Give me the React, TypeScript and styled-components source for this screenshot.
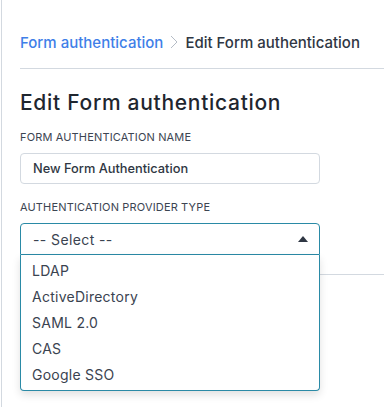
import React from "react";
import styled, { createGlobalStyle } from "styled-components";

const Global = createGlobalStyle`
  html, body { margin: 0; padding: 0; background: #ffffff; }
  body { font-family: Inter, "Open Sans", sans-serif; color: #2d3748; }
  * { box-sizing: border-box; }
`;

const Page = styled.div`
  margin-left: 1px;
  border-left: 1px solid #d3d9e0;
  min-height: 407px;
  padding-left: 18px;
`;

const Breadcrumb = styled.nav`
  display: flex;
  align-items: center;
  height: 69px;
  padding-top: 16px;
  font-size: 15px;
  font-weight: 500;
  border-bottom: 1px solid #d3d9e0;
`;

const Crumb = styled.span<{ $link?: boolean }>`
  color: ${(p) => (p.$link ? "#3f7fe8" : "#2f3743")};
`;

const Chevron = styled.svg`
  margin: 0 7px 0 7px;
`;

const Content = styled.div`
  width: 300px;
`;

const Title = styled.h1`
  margin: 21px 0 0;
  font-size: 21px;
  font-weight: 500;
  letter-spacing: 0.7px;
  color: #1f262f;
  line-height: 26px;
`;

const Field = styled.div<{ $gap: number }>`
  margin-top: ${(p) => p.$gap}px;
  position: relative;
`;

const Label = styled.div`
  font-size: 11px;
  letter-spacing: 0.15px;
  text-transform: uppercase;
  color: #3c4552;
  line-height: 14px;
  margin-bottom: 9px;
`;

const Input = styled.div`
  height: 31px;
  border: 1px solid #d3d9e0;
  border-radius: 4px;
  display: flex;
  align-items: center;
  padding-left: 12px;
  font-size: 12.8px;
  font-weight: 500;
  color: #2f3743;
`;

const Select = styled.div`
  height: 32px;
  border: 1px solid #2a8aa6;
  border-radius: 4px 4px 0 0;
  display: flex;
  align-items: center;
  justify-content: space-between;
  padding: 0 11px 0 12px;
  font-size: 14px;
  letter-spacing: 0.4px;
  color: #3a4350;
`;

const Menu = styled.ul`
  position: absolute;
  left: 0;
  right: 0;
  top: 100%;
  margin: 0;
  padding: 2px 0 3px;
  list-style: none;
  background: #ffffff;
  border: 1px solid #2a8aa6;
  border-top: none;
  border-radius: 0 0 4px 4px;
  box-shadow: 0 4px 8px rgba(0, 0, 0, 0.12);
  z-index: 2;
`;

const Option = styled.li`
  height: 26px;
  display: flex;
  align-items: center;
  padding-left: 11px;
  font-size: 14px;
  letter-spacing: 0.25px;
  color: #3a4350;
`;

const Rule = styled.div`
  margin-top: 19px;
  border-top: 1px solid #d3d9e0;
`;

const options = ["LDAP", "ActiveDirectory", "SAML 2.0", "CAS", "Google SSO"];

export default function App() {
  return (
    <>
      <Global />
      <Page>
        <Breadcrumb>
          <Crumb $link>Form authentication</Crumb>
          <Chevron width="8" height="14" viewBox="0 0 8 14">
            <path d="M1 1 L7 7 L1 13" fill="none" stroke="#b5bcc6" strokeWidth="1" />
          </Chevron>
          <Crumb>Edit Form authentication</Crumb>
        </Breadcrumb>
        <Content>
          <Title>Edit Form authentication</Title>
          <Field $gap={14}>
            <Label>Form authentication name</Label>
            <Input>New Form Authentication</Input>
          </Field>
          <Field $gap={16}>
            <Label>Authentication provider type</Label>
            <Select>
              <span>-- Select --</span>
              <svg width="10" height="6" viewBox="0 0 10 6">
                <path d="M0 6 L5 0 L10 6 Z" fill="#2f3743" />
              </svg>
            </Select>
            <Menu>
              {options.map((o) => (
                <Option key={o}>{o}</Option>
              ))}
            </Menu>
          </Field>
        </Content>
        <Rule />
      </Page>
    </>
  );
}
